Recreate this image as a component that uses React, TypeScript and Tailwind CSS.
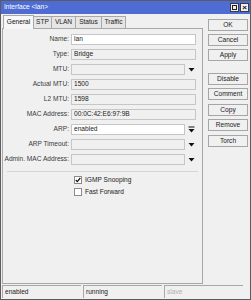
import { ReactNode } from "react";

const font = { fontFamily: '"Liberation Sans", Arial, sans-serif' };

type Field = {
  label: string;
  value?: string;
  white?: boolean;
  arrow?: "plain" | "boxed";
};

const fields: Field[] = [
  { label: "Name:", value: "lan", white: true },
  { label: "Type:", value: "Bridge" },
  { label: "MTU:", arrow: "plain" },
  { label: "Actual MTU:", value: "1500" },
  { label: "L2 MTU:", value: "1598" },
  { label: "MAC Address:", value: "00:0C:42:E6:97:9B" },
  { label: "ARP:", value: "enabled", white: true, arrow: "boxed" },
  { label: "ARP Timeout:", arrow: "plain" },
  { label: "Admin. MAC Address:", arrow: "plain" },
];

const buttons = [
  ["OK", "mt-[5px]"],
  ["Cancel", "mt-[3px]"],
  ["Apply", "mt-[3px]"],
  ["Disable", "mt-[12px]"],
  ["Comment", "mt-[3px]"],
  ["Copy", "mt-[4px]"],
  ["Remove", "mt-[3px]"],
  ["Torch", "mt-[4px]"],
];

const tabs = [
  ["General", "w-[31px]"],
  ["STP", "w-[19px]"],
  ["VLAN", "w-[25px]"],
  ["Status", "w-[27px]"],
  ["Traffic", "w-[25px]"],
];

function Arrow({ boxed }: { boxed?: boolean }) {
  return (
    <div className="w-[10px] h-[11px] flex items-center justify-center">
      <svg width="7" height="7" viewBox="0 0 7 7">
        {boxed && <rect x="0.5" y="0.5" width="6" height="1" fill="#111" />}
        <path d={boxed ? "M0.5 3 L6.5 3 L3.5 6.5 Z" : "M0.5 2 L6.5 2 L3.5 5.5 Z"} fill="#111" />
      </svg>
    </div>
  );
}

function Row({ f }: { f: Field }) {
  return (
    <div className="flex items-center h-[15px]">
      <div className="w-[68px] pr-[2px] text-right text-[#3a3a3a] whitespace-nowrap">{f.label}</div>
      <div
        className={`h-[11px] border border-[#c6c6c6] px-[2px] flex items-center text-[#222] ${
          f.white ? "bg-white" : "bg-[#f0f0f0]"
        } ${f.arrow ? "w-[114px]" : "w-[125px]"}`}
      >
        {f.value}
      </div>
      {f.arrow && <div className="ml-[1px]"><Arrow boxed={f.arrow === "boxed"} /></div>}
    </div>
  );
}

function Check({ checked, children }: { checked?: boolean; children: ReactNode }) {
  return (
    <div className="flex items-center h-[12px] ml-[71px]">
      <div className="w-[8px] h-[8px] border border-[#8a8a8a] bg-white flex items-center justify-center">
        {checked && (
          <svg width="6" height="6" viewBox="0 0 6 6">
            <path d="M0.8 3 L2.3 4.6 L5.3 1" stroke="#111" strokeWidth="1.2" fill="none" />
          </svg>
        )}
      </div>
      <span className="ml-[3px] text-[#222]">{children}</span>
    </div>
  );
}

export default function App() {
  return (
    <div
      className="w-[251px] h-[300px] bg-[#f0f0f0] border border-[#5c5c5c] flex flex-col text-[6.6px] leading-none overflow-hidden"
      style={font}
    >
      <div className="h-[13px] bg-[#4e6cd4] flex items-center justify-between pl-[3px] pr-[1px] shrink-0">
        <span className="text-white">Interface &lt;lan&gt;</span>
        <div className="flex gap-[1px]">
          <div className="w-[9px] h-[9px] bg-[#f0f0f0] border border-[#3a3a3a] flex items-center justify-center">
            <div className="w-[5px] h-[5px] border border-[#222]" />
          </div>
          <div className="w-[9px] h-[9px] bg-[#f0f0f0] border border-[#3a3a3a] flex items-center justify-center text-[8px] font-bold text-[#111]">
            ×
          </div>
        </div>
      </div>

      <div className="flex flex-1 min-h-0">
        <div className="w-[201px] ml-[1px] flex flex-col">
          <div className="flex items-end h-[14px] pl-[1px] shrink-0">
            {tabs.map(([t, w], i) => (
              <div
                key={t}
                className={`${w} flex items-center justify-center border border-b-0 border-[#a8a8a8] ${
                  i === 0
                    ? "h-[14px] bg-[#f7f7f7] text-[#111] relative top-[1px] z-10"
                    : "h-[12px] bg-[#e6e6e6] text-[#222] -ml-[1px]"
                }`}
              >
                {t}
              </div>
            ))}
          </div>
          <div className="flex-1 border border-[#a8a8a8] bg-[#f0f0f0] pt-[3px] mb-[1px]">
            {fields.map((f) => (
              <Row key={f.label} f={f} />
            ))}
            <div className="h-px bg-[#d4d4d4] mx-[4px] mt-[4px] mb-[2px]" />
            <Check checked>IGMP Snooping</Check>
            <Check>Fast Forward</Check>
          </div>
        </div>

        <div className="flex flex-col ml-[5px] w-[40px]">
          {buttons.map(([b, m]) => (
            <div
              key={b}
              className={`${m} h-[12px] border border-[#a6a6a6] bg-[#f0f0f0] flex items-center justify-center text-[#222]`}
            >
              {b}
            </div>
          ))}
        </div>
      </div>

      <div className="h-[14px] flex gap-[2px] px-[1px] pb-[1px] shrink-0">
        {[
          ["enabled", "text-[#222]"],
          ["running", "text-[#222]"],
          ["slave", "text-[#b0b0b0]"],
        ].map(([s, c]) => (
          <div
            key={s}
            className={`w-[79px] border-t border-l border-[#a8a8a8] flex items-center pl-[2px] ${c}`}
          >
            {s}
          </div>
        ))}
      </div>
    </div>
  );
}
